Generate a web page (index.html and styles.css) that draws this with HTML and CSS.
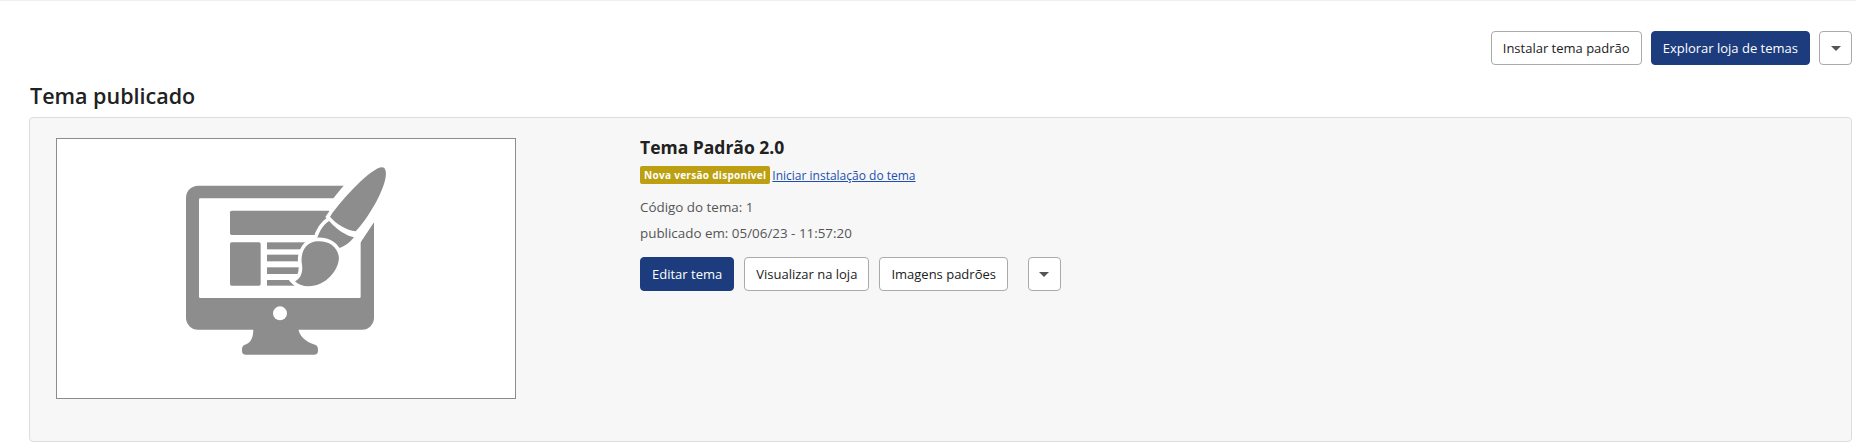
FILE: index.html
```html
<!DOCTYPE html>
<html lang="pt-BR">
<head>
    <meta charset="UTF-8">
    <title>Temas</title>
    <link rel="stylesheet" href="styles.css">
</head>
<body>
    <div class="toolbar">
        <a class="btn" href="#">Instalar tema padrão</a>
        <a class="btn btn-primary" href="#">Explorar loja de temas</a>
        <a class="btn btn-caret" href="#"><span class="caret"></span></a>
    </div>

    <h2 class="section-title">Tema publicado</h2>

    <div class="theme-card">
        <div class="theme-thumb">
            <svg class="theme-icon" viewBox="0 0 720 630" width="240" height="210">
                <rect x="48" y="95" width="564" height="432" rx="36" fill="#8c8d8c"/>
                <rect x="87" y="133" width="485" height="299" rx="4" fill="#fff"/>
                <circle cx="330" cy="478" r="21" fill="#fff"/>
                <path d="M250 525C250 555 240 568 225 572C216 575 216 582 216 590C216 598 220 602 228 602H432C440 602 444 598 444 590C444 582 444 575 435 572C420 568 390 555 385 525Z" fill="#8c8d8c"/>
                <rect x="180" y="170" width="300" height="73" rx="5" fill="#8c8d8c"/>
                <rect x="180" y="265" width="92" height="130" rx="5" fill="#8c8d8c"/>
                <rect x="291" y="265" width="130" height="21" fill="#8c8d8c"/>
                <rect x="291" y="302" width="130" height="20" fill="#8c8d8c"/>
                <rect x="291" y="340" width="130" height="20" fill="#8c8d8c"/>
                <rect x="291" y="378" width="130" height="17" fill="#8c8d8c"/>
                <polygon points="525,90 490,133 560,275 572,265 612,205 625,90" fill="#fff"/>
                <path d="M478 200C500 228 530 245 552 250C535 272 515 282 490 287C480 270 465 262 440 258C445 240 455 215 478 200Z" fill="#8c8d8c" stroke="#fff" stroke-width="22" paint-order="stroke"/>
                <path d="M440 262C475 260 499 275 506 305C512 340 472 397 415 397C400 397 385 392 375 382C395 372 400 350 395 325C392 290 410 265 440 262Z" fill="#8c8d8c" stroke="#fff" stroke-width="22" paint-order="stroke"/>
                <path d="M646 48C658 80 606 180 557 232C530 228 500 212 480 188C520 130 606 40 636 40C642 40 645 44 646 48Z" fill="#8c8d8c" stroke="#fff" stroke-width="22" paint-order="stroke"/>
            </svg>
        </div>
        <div class="theme-info">
            <h3 class="theme-name">Tema Padrão 2.0</h3>
            <div class="theme-update">
                <span class="badge">Nova versão disponível</span>
                <a class="link" href="#">Iniciar instalação do tema</a>
            </div>
            <p class="meta">Código do tema: 1</p>
            <p class="meta">publicado em: 05/06/23 - 11:57:20</p>
            <div class="theme-actions">
                <a class="btn btn-primary" href="#">Editar tema</a>
                <a class="btn" href="#">Visualizar na loja</a>
                <a class="btn" href="#">Imagens padrões</a>
                <a class="btn btn-caret btn-more" href="#"><span class="caret"></span></a>
            </div>
        </div>
    </div>
</body>
</html>
```

FILE: styles.css
```css
body {
    margin: 0;
    border-top: 1px solid #F0F0F0;
    background-color: #FFFFFF;
    font-family: "Open Sans", Arial, sans-serif;
    font-size: 13px;
    color: #212121;
}
.toolbar {
    display: flex;
    justify-content: flex-end;
    gap: 9px;
    padding: 30px 4px 0 0;
}
.btn {
    display: flex;
    align-items: center;
    justify-content: center;
    box-sizing: border-box;
    height: 34px;
    padding: 0 11px;
    background-color: #FFFFFF;
    border: 1px solid #AAAAAA;
    border-radius: 4px;
    color: #212121;
    font-size: 13px;
    text-decoration: none;
    white-space: nowrap;
}
.btn-primary {
    background-color: #1C3C7D;
    border-color: #1C3C7D;
    color: #FFFFFF;
}
.btn-caret {
    width: 33px;
    padding: 0;
}
.btn-more {
    margin-left: 10px;
}
.caret {
    width: 0;
    height: 0;
    border-left: 5px solid transparent;
    border-right: 5px solid transparent;
    border-top: 5px solid #555555;
}
.section-title {
    margin: 17px 0 0 30px;
    height: 35px;
    font-size: 21.5px;
    font-weight: 600;
    line-height: 28px;
    color: #212121;
}
.theme-card {
    display: grid;
    grid-template-columns: 584px 1fr;
    box-sizing: border-box;
    height: 325px;
    margin: 0 4px 0 29px;
    padding: 20px 26px;
    background-color: #F7F7F7;
    border: 1px solid #DDDDDD;
    border-radius: 4px;
}
.theme-thumb {
    box-sizing: border-box;
    width: 460px;
    height: 261px;
    background-color: #FFFFFF;
    border: 1px solid #8C8C8C;
}
.theme-icon {
    display: block;
    margin: 15px 0 0 113px;
}
.theme-name {
    margin: -2px 0 0;
    font-size: 17.5px;
    font-weight: 700;
    line-height: 22px;
    color: #212121;
}
.theme-update {
    display: flex;
    align-items: center;
    gap: 2px;
    margin-top: 8px;
}
.badge {
    padding: 0 4px;
    height: 18px;
    line-height: 18px;
    background-color: #BCA012;
    border-radius: 2px;
    color: #FFFFFF;
    font-size: 10px;
    font-weight: 700;
    letter-spacing: 0.3px;
}
.link {
    color: #1C4FB0;
    font-size: 12px;
}
.meta {
    margin: 0;
    height: 26px;
    line-height: 26px;
    font-size: 13.4px;
    color: #555555;
}
.theme-update + .meta {
    margin-top: 10px;
}
.theme-actions {
    display: flex;
    gap: 10px;
    margin-top: 11px;
}
```
